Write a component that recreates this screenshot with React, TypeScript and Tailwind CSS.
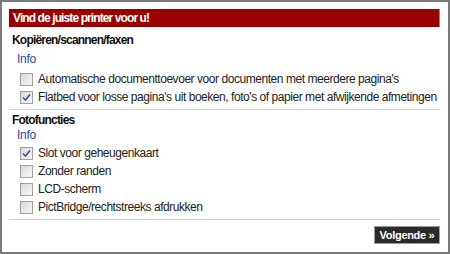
import React from "react";

const Check = ({ label, checked }: { label: string; checked?: boolean }) => {
  return (
    <div className="flex h-[18px] items-center">
      <span className="ml-[11px] mr-[5px] flex h-[13px] w-[13px] shrink-0 items-center justify-center border border-[#a0a0a0] bg-gradient-to-br from-[#d8d8d8] to-[#f8f8f8]">
        {checked && (
          <svg width="9" height="9" viewBox="0 0 9 9">
            <path d="M1 4.5 L3.5 7 L8 1.5" fill="none" stroke="#3a4fa8" strokeWidth="1.6" />
          </svg>
        )}
      </span>
      <span className="whitespace-nowrap text-[12px] tracking-[-0.45px] text-[#222]">{label}</span>
    </div>
  );
};

export default function App() {
  return (
    <div className="h-[254px] w-[450px] border-2 border-[#7a7a7a] bg-white font-['Liberation_Sans',Arial,sans-serif]">
      <div className="w-[438px] pl-[7px] pt-[7px]">
        <div className="flex h-[18px] w-[431px] items-center border-r border-[#d96a6a] bg-[#990000] pl-[4px] text-[12px] font-bold tracking-[-0.9px] text-white">
          Vind de juiste printer voor u!
        </div>
        <div className="w-[431px]">
          <div className="pt-[6px]">
            <div className="pl-[3px] text-[12px] font-bold leading-[15px] tracking-[-0.8px] text-[#111]">
              Kopiëren/scannen/faxen
            </div>
            <div className="mt-[4px] pl-[8px] text-[12px] leading-[15px] tracking-[-0.3px] text-[#2a4a9c]">Info</div>
            <div className="mt-[3px] flex flex-col">
              <Check label="Automatische documenttoevoer voor documenten met meerdere pagina's" />
              <Check label="Flatbed voor losse pagina's uit boeken, foto's of papier met afwijkende afmetingen" checked />
            </div>
          </div>
          <div className="mt-[3px] border-t border-[#d0d0d0] pt-[3px]">
            <div className="pl-[3px] text-[12px] font-bold leading-[15px] tracking-[-0.8px] text-[#111]">Fotofuncties</div>
            <div className="pl-[8px] text-[12px] leading-[15px] tracking-[-0.3px] text-[#2a4a9c]">Info</div>
            <div className="mt-[1px] flex flex-col">
              <Check label="Slot voor geheugenkaart" checked />
              <Check label="Zonder randen" />
              <Check label="LCD-scherm" />
              <Check label="PictBridge/rechtstreeks afdrukken" />
            </div>
          </div>
          <div className="mt-[3px] border-t border-[#d0d0d0] pt-[6px]">
            <div className="flex justify-end">
              <button className="flex h-[18px] w-[66px] items-center justify-center border border-[#9a9a9a] bg-[#2b2b2b] text-[11px] font-bold tracking-[-0.3px] text-white">
                Volgende »
              </button>
            </div>
          </div>
        </div>
      </div>
    </div>
  );
}
